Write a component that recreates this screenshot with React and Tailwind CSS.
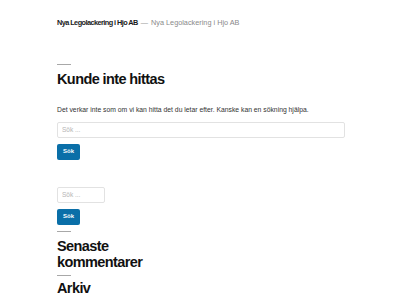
import React from 'react';

const font = { fontFamily: '"Liberation Sans", Arial, sans-serif' };

const Rule = ({ className = '' }) => <div className={`h-px w-[14px] bg-[#a8a8a8] ${className}`} />;

const SearchForm = ({ wide }) => (
  <form className="flex flex-col" onSubmit={(e) => e.preventDefault()}>
    <input
      type="search"
      placeholder="Sök ..."
      className={`h-[16px] ${wide ? 'w-[288px]' : 'w-[48px]'} rounded-[2px] border border-[#e2e2e2] bg-white px-[4px] text-[6.5px] text-[#333] outline-none placeholder:text-[#b5b5b5]`}
    />
    <button
      type="submit"
      className="mt-[6px] h-[16px] w-[23px] rounded-[2px] bg-[#0a6fa8] text-[6px] font-bold text-white"
    >
      Sök
    </button>
  </form>
);

export default function App() {
  return (
    <div className="min-h-[300px] w-[400px] overflow-hidden bg-white pl-[57px]" style={font}>
      <header className="flex items-baseline pt-[18px] text-[7.3px] leading-[10px]">
        <span className="font-semibold tracking-[-0.55px] text-[#1a1a1a]">Nya Legolackering i Hjo AB</span>
        <span className="mx-[3px] text-[#9a9a9a]">—</span>
        <span className="text-[#8a8a8a]">Nya Legolackering i Hjo AB</span>
      </header>

      <main className="mt-[36px] flex flex-col">
        <Rule />
        <h1 className="mt-[6px] text-[14.5px] font-bold leading-[16.6px] tracking-[-0.6px] text-[#111]">
          Kunde inte hittas
        </h1>
        <p className="mt-[17px] text-[6.8px] leading-[10px] text-[#333]">
          Det verkar inte som om vi kan hitta det du letar efter. Kanske kan en sökning hjälpa.
        </p>
        <div className="mt-[7px]">
          <SearchForm wide />
        </div>
      </main>

      <aside className="mt-[27px] flex flex-col">
        <SearchForm />
        <Rule className="mt-[6px]" />
        <h2 className="mt-[6px] w-[120px] text-[14.5px] font-bold leading-[16.6px] tracking-[-0.6px] text-[#111]">
          Senaste kommentarer
        </h2>
        <Rule className="mt-[4px]" />
        <h2 className="mt-[4px] text-[14.5px] font-bold leading-[16.6px] tracking-[-0.6px] text-[#111]">
          Arkiv
        </h2>
      </aside>
    </div>
  );
}
